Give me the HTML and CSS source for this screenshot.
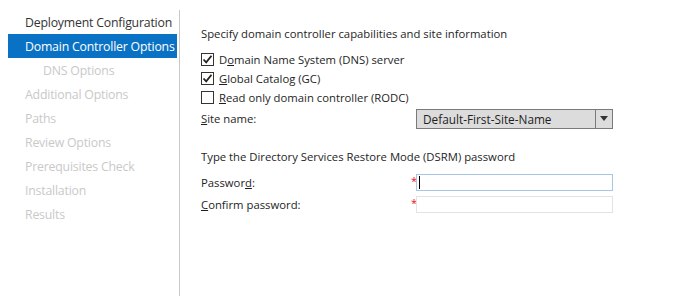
FILE: index.html
```html
<!DOCTYPE html>
<html lang="en">
<head>
   <meta charset="UTF-8">
   <title>Domain Controller Options</title>
   <link rel="stylesheet" href="styles.css">
</head>
<body>
   <div class="wizard">
      <ul class="steps">
         <li class="step done">Deployment Configuration</li>
         <li class="step current">Domain Controller Options</li>
         <li class="step sub">DNS Options</li>
         <li class="step">Additional Options</li>
         <li class="step">Paths</li>
         <li class="step">Review Options</li>
         <li class="step">Prerequisites Check</li>
         <li class="step">Installation</li>
         <li class="step">Results</li>
      </ul>
      <div class="page">
         <p class="section-title">Specify domain controller capabilities and site information</p>
         <label class="check-row">
            <span class="box"><svg viewBox="0 0 11 11" width="11" height="11"><path d="M1.5 5.5 L4.2 8.3 L9.5 1.8" fill="none" stroke="#222" stroke-width="1.8"/></svg></span>
            <span>D<u>o</u>main Name System (DNS) server</span>
         </label>
         <label class="check-row">
            <span class="box"><svg viewBox="0 0 11 11" width="11" height="11"><path d="M1.5 5.5 L4.2 8.3 L9.5 1.8" fill="none" stroke="#222" stroke-width="1.8"/></svg></span>
            <span><u>G</u>lobal Catalog (GC)</span>
         </label>
         <label class="check-row">
            <span class="box"></span>
            <span><u>R</u>ead only domain controller (RODC)</span>
         </label>
         <div class="field-row site-row">
            <span class="field-label"><u>S</u>ite name:</span>
            <span class="req"></span>
            <div class="combo">
               <span class="combo-text">Default-First-Site-Name</span>
               <span class="combo-arrow"><svg viewBox="0 0 8 5" width="8" height="5"><path d="M0 0 H8 L4 5 Z" fill="#333"/></svg></span>
            </div>
         </div>
         <p class="section-title dsrm-title">Type the Directory Services Restore Mode (DSRM) password</p>
         <div class="field-row">
            <span class="field-label">Passwor<u>d</u>:</span>
            <span class="req">*</span>
            <div class="text-input focused"><span class="caret"></span></div>
         </div>
         <div class="field-row">
            <span class="field-label"><u>C</u>onfirm password:</span>
            <span class="req">*</span>
            <div class="text-input"></div>
         </div>
      </div>
   </div>
</body>
</html>
```
FILE: styles.css
```css
body {
   margin: 0;
   padding: 0;
   background-color: #fff;
   font-family: 'Open Sans', 'Noto Sans', sans-serif;
   color: #1e1e1e;
}

.wizard {
   display: flex;
   height: 296px;
}

.steps {
   list-style: none;
   margin: 10px 0 0 0;
   padding: 0 2px 0 8px;
   width: 169px;
   border-right: 1px solid #c9c9c9;
}

.step {
   height: 23px;
   padding-top: 1px;
   line-height: 24px;
   padding-left: 17px;
   font-size: 12.3px;
   letter-spacing: -0.2px;
   color: #c9c9c9;
   white-space: nowrap;
}

.step.done {
   color: #333;
}

.step.current {
   background-color: #0a72c4;
   color: #fff;
}

.step.sub {
   padding-left: 35px;
}

.page {
   padding: 26px 0 0 21px;
   font-size: 11.3px;
}

.section-title {
   margin: 0 0 8px 0;
   height: 16px;
   line-height: 16px;
}

.dsrm-title {
   margin: 20px 0 6px 0;
}

.check-row {
   display: flex;
   align-items: center;
   gap: 5px;
   height: 19px;
}

.box {
   display: flex;
   align-items: center;
   justify-content: center;
   width: 11px;
   height: 11px;
   border: 1px solid #333;
   background: #fff;
}

.field-row {
   display: grid;
   grid-template-columns: 210px 5px 197px;
   align-items: center;
   height: 22px;
}

.site-row {
   height: 21px;
   margin-top: 1px;
}

.req {
   color: #e81123;
   font-size: 11px;
   align-self: start;
   line-height: 14px;
   margin-top: 3px;
}

.combo {
   display: flex;
   height: 18px;
   border: 1px solid #7a7a7a;
   background-color: #dcdcdc;
}

.combo-text {
   flex: 1;
   padding-left: 6px;
   line-height: 18px;
   font-size: 11.8px;
}

.combo-arrow {
   display: flex;
   align-items: center;
   justify-content: center;
   width: 16px;
   border-left: 1px solid #7a7a7a;
}

.text-input {
   display: flex;
   align-items: center;
   height: 15px;
   border: 1px solid #e3e3e3;
   background: #fff;
}

.text-input.focused {
   border-color: #a7c5e6;
}

.caret {
   width: 1px;
   height: 13px;
   margin-left: 2px;
   background: #000;
}
```
